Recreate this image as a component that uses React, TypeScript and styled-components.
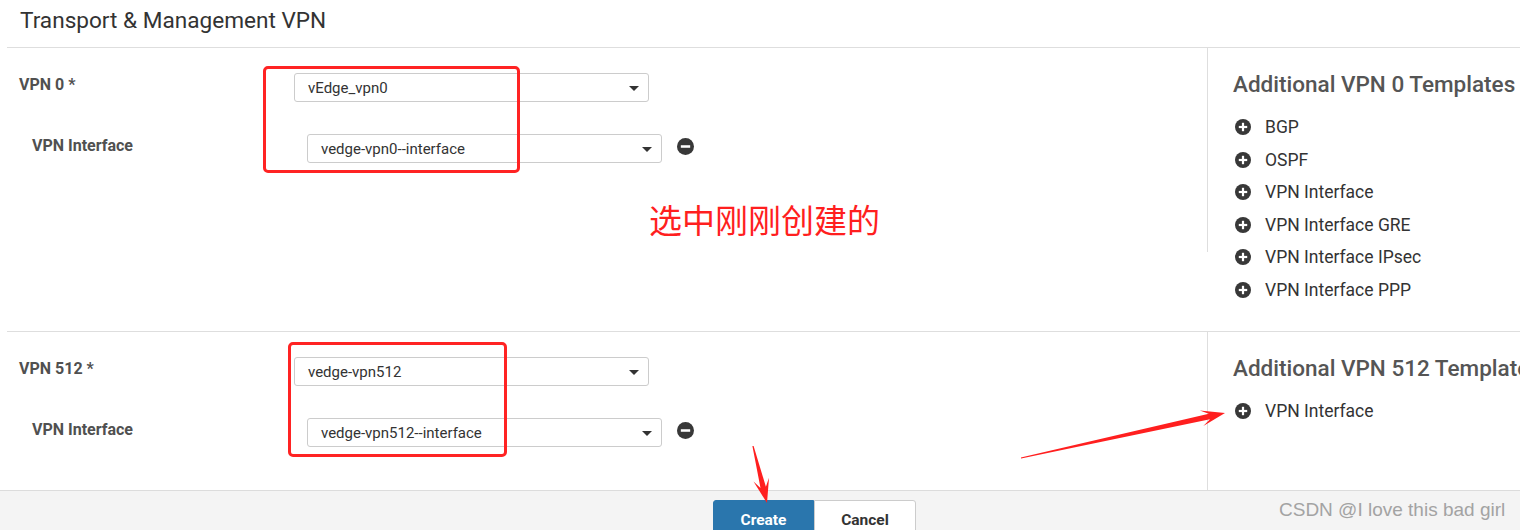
import * as React from "react";
import styled, { createGlobalStyle } from "styled-components";

const GlobalStyle = createGlobalStyle`
	* {
		box-sizing: border-box;
	}
	body {
		margin: 0;
		background: #fff;
		overflow: hidden;
		font-family: Roboto, "Noto Sans", Arial, sans-serif;
	}
`;

const Viewport = styled.div`
	position: relative;
	width: 1520px;
	height: 530px;
	overflow: hidden;
`;

// the original page is wider than the screenshot, so the right panel gets clipped
const Page = styled.div`
	width: 1629px;
	height: 530px;
	display: flex;
	flex-direction: column;
`;

const Main = styled.div`
	flex: 1;
	min-height: 0;
	overflow: hidden;
	margin-left: 7px;
`;

const Header = styled.div`
	height: 47px;
	padding-left: 13px;
`;

const Title = styled.h2`
	margin: 0;
	font-size: 22.6px;
	line-height: 42px;
	font-weight: 400;
	color: #333;
`;

const Section = styled.section`
	position: relative;
	display: flex;
	align-items: flex-start;
	border-top: 1px solid #dedede;
`;

const LeftCol = styled.div`
	width: 1201px;
	min-height: 204px;
	padding: 25px 0 0 12px;
	border-right: 1px solid #dedede;
`;

const RightCol = styled.div`
	flex: 1;
	padding: 22px 0 25px 25px;
`;

const Row = styled.div`
	display: flex;
	align-items: flex-start;
`;

const SubRow = styled(Row)`
	margin-top: 32px;
	padding-left: 13px;
`;

const Label = styled.div`
	width: 275px;
	font-size: 16px;
	line-height: 23px;
	font-weight: 700;
	color: #505050;
`;

const Select = styled.div`
	position: relative;
	width: 355px;
	height: 29px;
	padding-left: 13px;
	border: 1px solid #ccc;
	border-radius: 3px;
	font-size: 15px;
	line-height: 28px;
	color: #333;
	background: #fff;
	&::after {
		content: "";
		position: absolute;
		right: 9px;
		top: 12px;
		border-left: 5px solid transparent;
		border-right: 5px solid transparent;
		border-top: 5px solid #333;
	}
`;

const RemoveButton = styled.svg`
	margin: 4px 0 0 15px;
	flex: none;
`;

const PanelTitle = styled.h3`
	margin: 0 0 13px;
	font-size: 22.5px;
	line-height: 28px;
	font-weight: 500;
	color: #555;
	white-space: nowrap;
`;

const TemplateList = styled.ul`
	margin: 0;
	padding: 0;
	list-style: none;
`;

const TemplateItem = styled.li`
	display: flex;
	align-items: center;
	gap: 14px;
	height: 32.5px;
	padding-left: 2px;
	font-size: 17.5px;
	color: #333;
	white-space: nowrap;
`;

const Footer = styled.div`
	height: 40px;
	flex: none;
	display: flex;
	justify-content: center;
	padding-top: 9px;
	background: #f4f4f4;
	border-top: 1px solid #dcdcdc;
`;

const Button = styled.button<{ $primary?: boolean }>`
	width: ${(p) => (p.$primary ? 101 : 102)}px;
	height: 38px;
	padding: 0;
	font-family: inherit;
	font-size: 15.5px;
	font-weight: 700;
	line-height: 38px;
	color: ${(p) => (p.$primary ? "#fff" : "#333")};
	background: ${(p) => (p.$primary ? "#2a76ad" : "#fff")};
	border: 1px solid ${(p) => (p.$primary ? "#2a76ad" : "#ccc")};
	border-radius: ${(p) => (p.$primary ? "3px 0 0 3px" : "0 3px 3px 0")};
`;

// annotations drawn over the screenshot
const RedBox = styled.div`
	position: absolute;
	border: 3px solid #ff2323;
	border-radius: 5px;
	pointer-events: none;
`;

const Note = styled.div`
	position: absolute;
	left: 642px;
	top: 153px;
	font-family: "Noto Sans CJK SC", sans-serif;
	font-size: 33px;
	line-height: 37px;
	color: #ff1f1f;
	white-space: nowrap;
`;

const ArrowLayer = styled.svg`
	position: absolute;
	left: 0;
	top: 0;
	pointer-events: none;
`;

const Watermark = styled.div`
	position: absolute;
	left: 1279px;
	top: 498px;
	font-family: "Liberation Sans", Arial, sans-serif;
	font-size: 19px;
	line-height: 24px;
	color: #a3a3a3;
	white-space: nowrap;
`;

const PlusIcon = () => (
	<svg width="16" height="16" viewBox="0 0 16 16">
		<circle cx="8" cy="8" r="8" fill="#383838" />
		<rect x="3.8" y="6.9" width="8.4" height="2.2" fill="#fff" />
		<rect x="6.9" y="3.8" width="2.2" height="8.4" fill="#fff" />
	</svg>
);

const MinusIcon = () => (
	<RemoveButton width="17" height="17" viewBox="0 0 16 16">
		<circle cx="8" cy="8" r="8" fill="#383838" />
		<rect x="3.6" y="6.8" width="8.8" height="2.4" fill="#fff" />
	</RemoveButton>
);

function arrow(tx: number, ty: number, px: number, py: number) {
	const len = Math.hypot(px - tx, py - ty);
	const ux = (px - tx) / len;
	const uy = (py - ty) / len;
	const nx = -uy;
	const ny = ux;
	const hx = px - ux * 16;
	const hy = py - uy * 16;
	const bx = px - ux * 24;
	const by = py - uy * 24;
	const pts = [
		[tx + nx * 0.6, ty + ny * 0.6],
		[hx + nx * 2.8, hy + ny * 2.8],
		[bx + nx * 8, by + ny * 8],
		[px, py],
		[bx - nx * 8, by - ny * 8],
		[hx - nx * 2.8, hy - ny * 2.8],
		[tx - nx * 0.6, ty - ny * 0.6],
	];
	return pts.map((p) => p.map((v) => v.toFixed(1)).join(",")).join(" ");
}

const vpn0Templates = [
	"BGP",
	"OSPF",
	"VPN Interface",
	"VPN Interface GRE",
	"VPN Interface IPsec",
	"VPN Interface PPP",
];

export default function App() {
	return (
		<Viewport>
			<GlobalStyle />
			<Page>
				<Main>
					<Header>
						<Title>Transport &amp; Management VPN</Title>
					</Header>

					<Section>
						<LeftCol>
							<Row>
								<Label>VPN 0 *</Label>
								<Select>vEdge_vpn0</Select>
							</Row>
							<SubRow>
								<Label>VPN Interface</Label>
								<Select>vedge-vpn0--interface</Select>
								<MinusIcon />
							</SubRow>
						</LeftCol>
						<RightCol>
							<PanelTitle>Additional VPN 0 Templates</PanelTitle>
							<TemplateList>
								{vpn0Templates.map((t) => (
									<TemplateItem key={t}>
										<PlusIcon />
										{t}
									</TemplateItem>
								))}
							</TemplateList>
						</RightCol>
						<RedBox style={{ left: 256, top: 18, width: 257, height: 107 }} />
						<Note>选中刚刚创建的</Note>
					</Section>

					<Section>
						<LeftCol>
							<Row>
								<Label>VPN 512 *</Label>
								<Select>vedge-vpn512</Select>
							</Row>
							<SubRow>
								<Label>VPN Interface</Label>
								<Select>vedge-vpn512--interface</Select>
								<MinusIcon />
							</SubRow>
						</LeftCol>
						<RightCol>
							<PanelTitle>Additional VPN 512 Templates</PanelTitle>
							<TemplateList>
								<TemplateItem>
									<PlusIcon />
									VPN Interface
								</TemplateItem>
							</TemplateList>
						</RightCol>
						<RedBox style={{ left: 281, top: 10, width: 219, height: 115 }} />
					</Section>
				</Main>

				<Footer>
					<Button $primary>Create</Button>
					<Button>Cancel</Button>
				</Footer>
			</Page>

			<ArrowLayer width="1520" height="530" viewBox="0 0 1520 530">
				<polygon points={arrow(1021, 458, 1225, 413)} fill="#ff1f1f" />
				<polygon points={arrow(753, 446, 767, 503)} fill="#ff1f1f" />
			</ArrowLayer>
			<Watermark>CSDN @I love this bad girl</Watermark>
		</Viewport>
	);
}
